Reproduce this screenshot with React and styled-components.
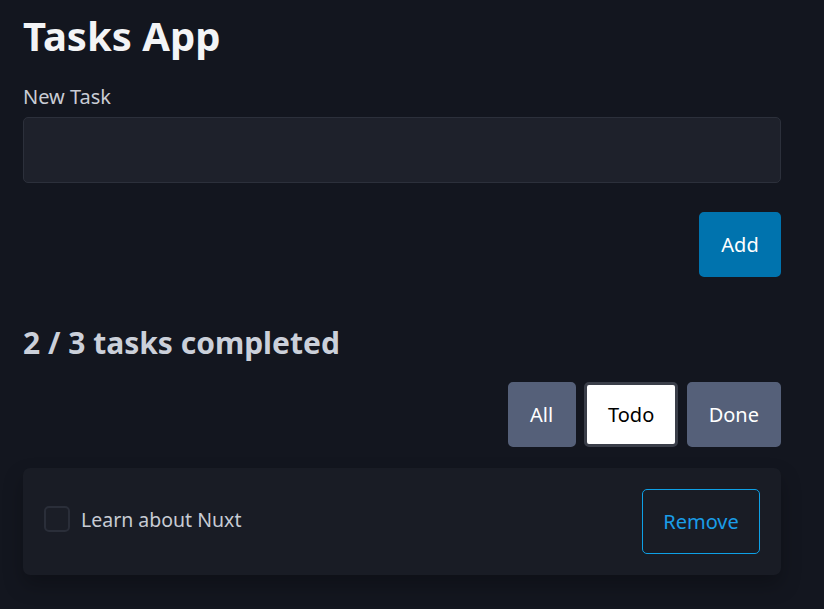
import React, { useState } from "react";
import styled, { createGlobalStyle } from "styled-components";

const Global = createGlobalStyle`
  html, body { margin: 0; padding: 0; background: #13161f; }
  body { font-family: "Noto Sans", "Open Sans", sans-serif; color: #c9ccd4; }
  * { box-sizing: border-box; }
`;

const Page = styled.main`
  width: 758px;
  margin-left: 23px;
  min-height: 609px;
  display: flex;
  flex-direction: column;
`;

const Title = styled.h1`
  margin: 8px 0 0;
  font-size: 40px;
  line-height: 56px;
  font-weight: 700;
  color: #f3f4f6;
`;

const Label = styled.label`
  margin-top: 20px;
  font-size: 20px;
  line-height: 26px;
  color: #c9ccd4;
`;

const Input = styled.input`
  margin-top: 7px;
  height: 66px;
  width: 100%;
  background: #1e212b;
  border: 1px solid #2c303b;
  border-radius: 5px;
  color: #e5e7eb;
  font: inherit;
  font-size: 20px;
  padding: 0 16px;
  outline: none;
`;

const Row = styled.div`
  display: flex;
  justify-content: flex-end;
  gap: ${(p) => p.$gap || 0}px;
  margin-top: ${(p) => p.$mt || 0}px;
`;

const Button = styled.button`
  height: 65px;
  min-width: ${(p) => p.$minw || 0}px;
  padding: 0 ${(p) => p.$px || 19}px;
  border-radius: 5px;
  font-family: inherit;
  font-size: 20px;
  cursor: pointer;
  border: 3px solid ${(p) => (p.$active ? "#3a3e49" : p.$bg)};
  background: ${(p) => p.$bg};
  color: ${(p) => p.$color};
`;

const Stats = styled.h2`
  margin: 46px 0 0;
  font-size: 30px;
  line-height: 40px;
  font-weight: 700;
  color: #cbd0da;
`;

const Card = styled.div`
  margin-top: 21px;
  height: 107px;
  background: #191c25;
  border-radius: 7px;
  box-shadow: 0 10px 20px rgba(0, 0, 0, 0.25);
  display: flex;
  align-items: center;
  justify-content: space-between;
  padding: 0 21px;
`;

const TaskLabel = styled.label`
  display: flex;
  align-items: center;
  gap: 11px;
  font-size: 19.5px;
  color: #c7cbd4;
  margin-top: -5px;
`;

const Check = styled.span`
  width: 26px;
  height: 26px;
  border: 2px solid #2a2e39;
  border-radius: 5px;
  background: #1b1e27;
`;

const RemoveButton = styled.button`
  height: 65px;
  width: 118px;
  border: 1px solid #0ea0e6;
  border-radius: 5px;
  background: transparent;
  color: #1a9de8;
  font-family: inherit;
  font-size: 20px;
`;

export default function App() {
  const [filter, setFilter] = useState("todo");
  const filters = [
    { key: "all", label: "All", minw: 68 },
    { key: "todo", label: "Todo", minw: 94 },
    { key: "done", label: "Done", minw: 94 },
  ];
  return (
    <>
      <Global />
      <Page>
        <Title>Tasks App</Title>
        <Label htmlFor="task">New Task</Label>
        <Input id="task" />
        <Row $mt={29}>
          <Button $bg="#0073ae" $color="#ffffff" $minw={82}>
            Add
          </Button>
        </Row>
        <Stats>2 / 3 tasks completed</Stats>
        <Row $mt={19} $gap={8.5}>
          {filters.map((f) => (
            <Button
              key={f.key}
              $minw={f.minw}
              $active={filter === f.key}
              $bg={filter === f.key ? "#ffffff" : "#556079"}
              $color={filter === f.key ? "#000000" : "#ffffff"}
              onClick={() => setFilter(f.key)}
            >
              {f.label}
            </Button>
          ))}
        </Row>
        <Card>
          <TaskLabel>
            <Check />
            Learn about Nuxt
          </TaskLabel>
          <RemoveButton>Remove</RemoveButton>
        </Card>
      </Page>
    </>
  );
}
